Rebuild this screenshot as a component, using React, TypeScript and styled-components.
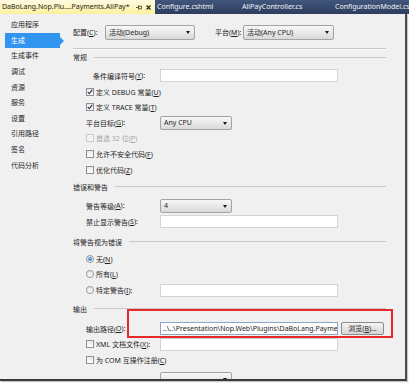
import styled, { createGlobalStyle } from 'styled-components';

const GlobalStyle = createGlobalStyle`
  html, body {
    margin: 0;
    padding: 0;
    background: #ffffff;
  }
  body {
    font-family: "Noto Sans", "Noto Sans CJK SC", sans-serif;
    font-size: 7px;
    color: #1e1e1e;
  }
`;

const Shot = styled.div`
  width: 409px;
  height: 383px;
  overflow: hidden;
  background: #ffffff;
  display: flex;
  flex-direction: column;
`;

const TabStrip = styled.div`
  height: 14px;
  flex: none;
  display: flex;
  background: linear-gradient(#42567d, #2c3d5d);
  line-height: 14px;
  white-space: nowrap;
  overflow: hidden;
`;

const Tab = styled.div<{ $active?: boolean; $w: number }>`
  width: ${({ $w }) => $w}px;
  flex: none;
  box-sizing: border-box;
  padding: 0 4px 0 2px;
  display: flex;
  align-items: center;
  color: ${({ $active }) => ($active ? '#1b1b1b' : '#f3f5fa')};
  background: ${({ $active }) => ($active ? 'linear-gradient(#fffbe2, #fdf09c)' : 'transparent')};
`;

const TabTitle = styled.span`
  flex: 1;
  overflow: hidden;
`;

const TabIcons = styled.span`
  display: flex;
  align-items: center;
  gap: 4px;
`;

const Frame = styled.div`
  position: relative;
  width: 405px;
  height: 365px;
  flex: none;
  display: flex;
  overflow: hidden;
  background: #f0f0f0;
  border-right: 2px solid #4b4b4b;
  border-bottom: 2px solid #3b3b3b;
  box-shadow: 1px 1px 1px #c6c6c6;
`;

const Nav = styled.div`
  width: 66px;
  flex: none;
  padding: 3.2px 0 0 5px;
  box-sizing: border-box;
`;

const NavItem = styled.div<{ $selected?: boolean }>`
  position: relative;
  width: 55px;
  height: 15.6px;
  line-height: 15.6px;
  padding-left: 6px;
  box-sizing: border-box;
  color: ${({ $selected }) => ($selected ? '#ffffff' : '#1e1e1e')};
  background: ${({ $selected }) => ($selected ? '#3195f0' : 'transparent')};

  ${({ $selected }) =>
    $selected &&
    `&::after {
      content: '';
      position: absolute;
      right: -4px;
      top: 3.8px;
      border-left: 4px solid #3195f0;
      border-top: 4px solid transparent;
      border-bottom: 4px solid transparent;
    }`}
`;

const Content = styled.div`
  flex: 1;
  padding: 10px 19px 0 7px;
  display: flex;
  flex-direction: column;

  & > * {
    flex-shrink: 0;
  }
`;

const ConfigRow = styled.div`
  height: 16px;
  display: flex;
  align-items: center;
  white-space: nowrap;
`;

const ConfigLabel = styled.span<{ $w: number; $ml?: number }>`
  width: ${({ $w }) => $w}px;
  margin-left: ${({ $ml }) => $ml ?? 0}px;
  flex: none;
`;

const Divider = styled.div`
  margin-top: 8px;
  height: 1px;
  background: #c8c8c8;
  border-bottom: 1px solid #fbfbfb;
`;

const Header = styled.div<{ $mt: number }>`
  height: 12px;
  margin-top: ${({ $mt }) => $mt}px;
  display: flex;
  align-items: center;
  gap: 7px;

  &::after {
    content: '';
    flex: 1;
    height: 1px;
    background: #c8c8c8;
  }
`;

const Rows = styled.div<{ $mt: number }>`
  margin-top: ${({ $mt }) => $mt}px;
  display: flex;
  flex-direction: column;

  & > * {
    flex-shrink: 0;
  }
`;

const Row = styled.div<{ $mt?: number }>`
  height: 15.6px;
  margin-top: ${({ $mt }) => $mt ?? 0}px;
  padding-left: 13px;
  display: flex;
  align-items: center;
  white-space: nowrap;
`;

const Label = styled.span<{ $indent?: number }>`
  width: 74px;
  flex: none;
  box-sizing: border-box;
  display: flex;
  align-items: center;
  padding-left: ${({ $indent }) => $indent ?? 0}px;
`;

const Option = styled.span<{ $disabled?: boolean }>`
  margin-left: 2px;
  color: ${({ $disabled }) => ($disabled ? '#a6a6a6' : '#1e1e1e')};
`;

const Box = styled.span<{ $disabled?: boolean }>`
  width: 8px;
  height: 8px;
  flex: none;
  box-sizing: border-box;
  display: flex;
  align-items: center;
  justify-content: center;
  border: 1px solid ${({ $disabled }) => ($disabled ? '#cbcbcb' : '#8f8f8f')};
  background: ${({ $disabled }) => ($disabled ? '#f4f4f4' : 'linear-gradient(#e9e9e9, #ffffff)')};
`;

const Radio = styled.span<{ $on?: boolean }>`
  width: 8px;
  height: 8px;
  flex: none;
  box-sizing: border-box;
  border-radius: 50%;
  border: 1px solid #959595;
  background: linear-gradient(#e4e4e4, #ffffff);
  display: flex;
  align-items: center;
  justify-content: center;

  &::after {
    content: '';
    width: 4px;
    height: 4px;
    border-radius: 50%;
    background: ${({ $on }) => ($on ? 'radial-gradient(circle at 40% 35%, #6fc0ff, #1462a8)' : 'transparent')};
  }
`;

const Select = styled.div<{ $w: number; $h?: number }>`
  position: relative;
  width: ${({ $w }) => $w}px;
  height: ${({ $h }) => $h ?? 14}px;
  line-height: ${({ $h }) => ($h ?? 14) - 2}px;
  flex: none;
  box-sizing: border-box;
  padding-left: 3px;
  border: 1px solid #a3a3a3;
  border-radius: 2px;
  background: linear-gradient(#f7f7f7, #e9e9e9 50%, #d9d9d9);

  &::after {
    content: '';
    position: absolute;
    right: 4px;
    top: 50%;
    margin-top: -1px;
    border-top: 3px solid #1a1a1a;
    border-left: 2.5px solid transparent;
    border-right: 2.5px solid transparent;
  }
`;

const Field = styled.div<{ $focus?: boolean }>`
  width: 178px;
  height: 13px;
  line-height: 11px;
  flex: none;
  box-sizing: border-box;
  padding-left: 2px;
  overflow: hidden;
  white-space: nowrap;
  background: #ffffff;
  border: 1px solid ${({ $focus }) => ($focus ? '#8aa7c9' : '#d3d3d3')};
`;

const Browse = styled.div`
  width: 43px;
  height: 13px;
  line-height: 11px;
  margin-left: 3px;
  flex: none;
  box-sizing: border-box;
  text-align: center;
  border: 1px solid #8c8c8c;
  border-radius: 2px;
  background: linear-gradient(#f4f4f4, #e4e4e4 50%, #d6d6d6);
`;

const Highlight = styled.div`
  position: absolute;
  left: 127px;
  top: 295px;
  width: 266px;
  height: 29px;
  box-sizing: border-box;
  border: 2px solid #e5292b;
`;

const navItems = ['应用程序', '生成', '生成事件', '调试', '资源', '服务', '设置', '引用路径', '签名', '代码分析'];

const Check = () => (
  <svg width="6" height="6" viewBox="0 0 6 6">
    <path d="M0.8 3.1 L2.3 4.7 L5.3 0.9" fill="none" stroke="#24375e" strokeWidth="1.2" />
  </svg>
);

const Pin = () => (
  <svg width="6" height="5" viewBox="0 0 6 5">
    <path d="M0 2.5 H2.5 M2.5 0.5 V4.5 M2.5 1.2 H5.5 V3.8 H2.5" fill="none" stroke="#4a4a4a" strokeWidth="0.9" />
  </svg>
);

const Close = () => (
  <svg width="5" height="5" viewBox="0 0 5 5">
    <path d="M0.5 0.5 L4.5 4.5 M4.5 0.5 L0.5 4.5" stroke="#222" strokeWidth="1.1" />
  </svg>
);

const App: React.FC = () => {
  return (
    <Shot>
      <GlobalStyle />
      <TabStrip>
        <Tab $active $w={155}>
          <TabTitle>DaBoLang.Nop.Plu....Payments.AliPay*</TabTitle>
          <TabIcons>
            <Pin />
            <Close />
          </TabIcons>
        </Tab>
        <Tab $w={85}>Configure.cshtml</Tab>
        <Tab $w={93}>AliPayController.cs</Tab>
        <Tab $w={90}>ConfigurationModel.cs</Tab>
      </TabStrip>

      <Frame>
        <Nav>
          {navItems.map((item) => (
            <NavItem key={item} $selected={item === '生成'}>
              {item}
            </NavItem>
          ))}
        </Nav>

        <Content>
          <ConfigRow>
            <ConfigLabel $w={32}>
              配置(<u>C</u>):
            </ConfigLabel>
            <Select $w={90} $h={15}>活动(Debug)</Select>
            <ConfigLabel $w={28} $ml={20}>
              平台(<u>M</u>):
            </ConfigLabel>
            <Select $w={91} $h={15}>活动(Any CPU)</Select>
          </ConfigRow>
          <Divider />

          <Header $mt={1}>常规</Header>
          <Rows $mt={5.2}>
            <Row>
              <Label $indent={7}>
                条件编译符号(<u>Y</u>):
              </Label>
              <Field />
            </Row>
            <Row>
              <Box>
                <Check />
              </Box>
              <Option>
                定义 DEBUG 常量(<u>U</u>)
              </Option>
            </Row>
            <Row>
              <Box>
                <Check />
              </Box>
              <Option>
                定义 TRACE 常量(<u>T</u>)
              </Option>
            </Row>
            <Row>
              <Label>
                平台目标(<u>G</u>):
              </Label>
              <Select $w={72}>Any CPU</Select>
            </Row>
            <Row>
              <Box $disabled />
              <Option $disabled>
                首选 32 位(<u>P</u>)
              </Option>
            </Row>
            <Row>
              <Box />
              <Option>
                允许不安全代码(<u>F</u>)
              </Option>
            </Row>
            <Row>
              <Box />
              <Option>
                优化代码(<u>Z</u>)
              </Option>
            </Row>
          </Rows>

          <Header $mt={3.6}>错误和警告</Header>
          <Rows $mt={5.2}>
            <Row>
              <Label>
                警告等级(<u>A</u>):
              </Label>
              <Select $w={72}>4</Select>
            </Row>
            <Row>
              <Label>
                禁止显示警告(<u>S</u>):
              </Label>
              <Field />
            </Row>
          </Rows>

          <Header $mt={6.6}>将警告视为错误</Header>
          <Rows $mt={3.2}>
            <Row>
              <Radio $on />
              <Option>
                无(<u>N</u>)
              </Option>
            </Row>
            <Row>
              <Radio />
              <Option>
                所有(<u>L</u>)
              </Option>
            </Row>
            <Row>
              <Label>
                <Radio />
                <Option>
                  特定警告(<u>I</u>):
                </Option>
              </Label>
              <Field />
            </Row>
          </Rows>

          <Header $mt={5}>输出</Header>
          <Rows $mt={6.2}>
            <Row>
              <Label>
                输出路径(<u>O</u>):
              </Label>
              <Field $focus>..\..\Presentation\Nop.Web\Plugins\DaBoLang.Payme</Field>
              <Browse>
                浏览(<u>B</u>)...
              </Browse>
            </Row>
            <Row>
              <Label>
                <Box />
                <Option>
                  XML 文档文件(<u>X</u>):
                </Option>
              </Label>
              <Field />
            </Row>
            <Row>
              <Box />
              <Option>
                为 COM 互操作注册(<u>C</u>)
              </Option>
            </Row>
            <Row $mt={3}>
              <Label />
              <Select $w={72} />
            </Row>
          </Rows>
        </Content>

        <Highlight />
      </Frame>
    </Shot>
  );
};

export default App;
